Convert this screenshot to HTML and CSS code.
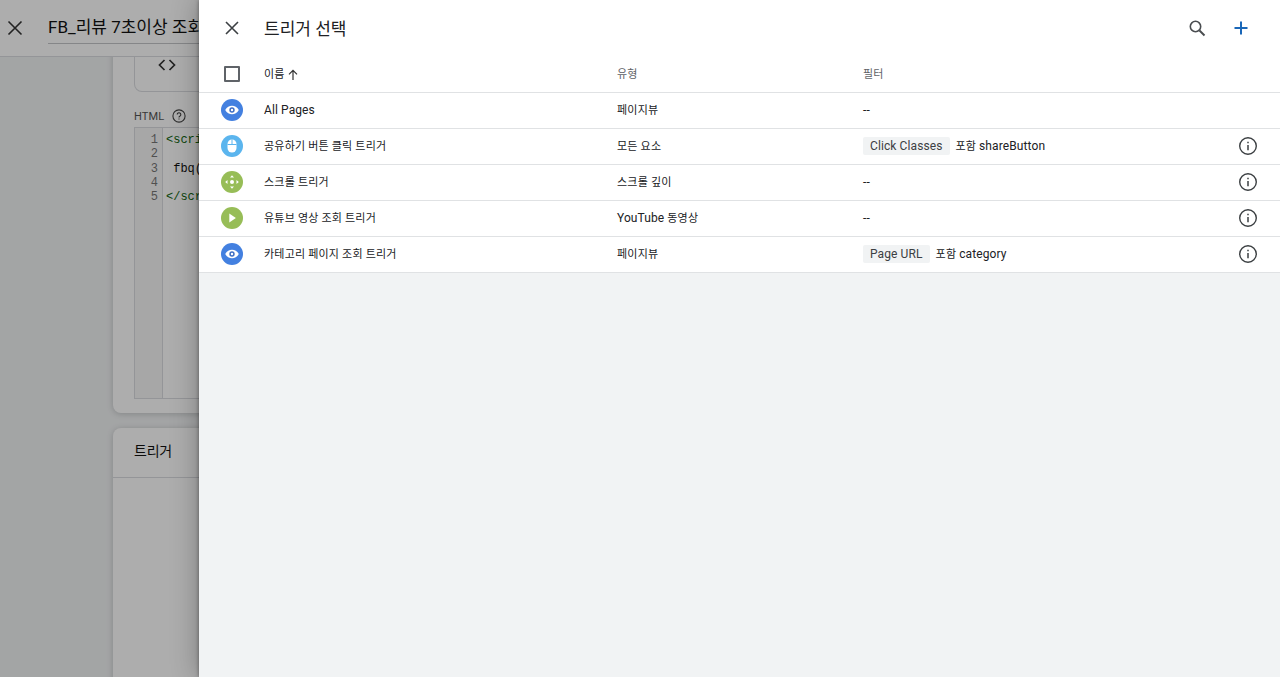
FILE: index.html
```html
<!DOCTYPE html>
<html lang="ko">
<head>
<meta charset="utf-8">
<title>트리거 선택</title>
<link rel="stylesheet" href="styles.css">
</head>
<body>
<div class="page">
  <div class="editor">
    <header class="topbar">
      <svg class="top-close" width="24" height="24" viewBox="0 0 24 24"><path d="M5.5 5.5l13 13M18.5 5.5l-13 13" fill="none" stroke="#333" stroke-width="1.6"/></svg>
      <div class="doc-title">FB_리뷰 7초이상 조회</div>
    </header>
    <main class="content">
      <section class="card card-config">
        <div class="type-box">
          <svg width="24" height="24" viewBox="0 0 24 24"><path d="M9.5 7l-5 5 5 5M14.5 7l5 5-5 5" fill="none" stroke="#333" stroke-width="1.7"/></svg>
        </div>
        <div class="html-label">
          <span>HTML</span>
          <svg width="14" height="14" viewBox="0 0 14 14"><circle cx="7" cy="7" r="6.1" fill="none" stroke="#444" stroke-width="1.1"/><path d="M5.2 5.5a1.8 1.8 0 1 1 2.8 1.5c-.7.4-1 .7-1 1.4M7 9.4v1.1" fill="none" stroke="#444" stroke-width="1.1"/></svg>
        </div>
        <div class="code-box">
          <div class="gutter"><span>1</span><span>2</span><span>3</span><span>4</span><span>5</span></div>
          <div class="code"><span class="tag">&lt;script&gt;</span><span>&nbsp;</span><span> fbq('track', 'ViewContent');</span><span>&nbsp;</span><span class="tag">&lt;/script&gt;</span></div>
        </div>
      </section>
      <section class="card card-trigger">
        <div class="card-head">트리거</div>
      </section>
    </main>
  </div>
  <div class="scrim"></div>
  <aside class="panel">
    <header class="panel-head">
      <svg class="panel-close" width="24" height="24" viewBox="0 0 24 24"><path d="M6 6l12 12M18 6L6 18" fill="none" stroke="#3c4043" stroke-width="1.6"/></svg>
      <h1 class="panel-title">트리거 선택</h1>
      <svg class="search" width="24" height="24" viewBox="0 0 24 24"><circle cx="10.5" cy="10.5" r="5.2" fill="none" stroke="#4a4d50" stroke-width="1.6"/><path d="M14.5 14.5l5 5" stroke="#4a4d50" stroke-width="1.9"/></svg>
      <svg class="plus" width="24" height="24" viewBox="0 0 24 24"><path d="M12 5.5v13M5.5 12h13" stroke="#1a67b8" stroke-width="2"/></svg>
    </header>
    <div class="table">
      <div class="row head">
        <div class="cell-icon"><span class="checkbox"></span></div>
        <div class="name-head">이름
          <svg width="14" height="14" viewBox="0 0 14 14"><path d="M7 12V2.5M3 6.3l4-4 4 4" fill="none" stroke="#333" stroke-width="1.2"/></svg>
        </div>
        <div>유형</div>
        <div>필터</div>
        <div></div>
      </div>
      <div class="row">
        <div class="cell-icon"><span class="badge blue"><svg width="16" height="16" viewBox="0 0 16 16"><path d="M1.2 8C3 5 5.3 3.7 8 3.7S13 5 14.8 8C13 11 10.7 12.3 8 12.3S3 11 1.2 8z" fill="#fff"/><circle cx="8" cy="8" r="2.7" fill="#3f6fc4"/><circle cx="8" cy="8" r="1.2" fill="#fff"/></svg></span></div>
        <div class="latin">All Pages</div>
        <div>페이지뷰</div>
        <div class="latin">--</div>
        <div></div>
      </div>
      <div class="row">
        <div class="cell-icon"><span class="badge sky"><svg width="16" height="16" viewBox="0 0 16 16"><rect x="3.5" y="1.5" width="9" height="13" rx="4.5" fill="#fff"/><path d="M3.5 6.5h9M8 1.5v5" stroke="#5bb5ee" stroke-width="1"/></svg></span></div>
        <div>공유하기 버튼 클릭 트리거</div>
        <div>모든 요소</div>
        <div class="filter"><span class="chip latin">Click Classes</span><span>포함 <span class="latin">shareButton</span></span></div>
        <div class="cell-info"><svg width="20" height="20" viewBox="0 0 20 20"><circle cx="10" cy="10" r="8.3" fill="none" stroke="#3c4043" stroke-width="1.4"/><path d="M10 9v5.2M10 5.7v1.6" stroke="#3c4043" stroke-width="1.5"/></svg></div>
      </div>
      <div class="row">
        <div class="cell-icon"><span class="badge green"><svg width="16" height="16" viewBox="0 0 16 16"><circle cx="8" cy="8" r="2" fill="#fff"/><path d="M8 1.2l2 2.3H6zM8 14.8l2-2.3H6zM1.2 8l2.3 2V6zM14.8 8l-2.3 2V6z" fill="#fff"/></svg></span></div>
        <div>스크롤 트리거</div>
        <div>스크롤 깊이</div>
        <div class="latin">--</div>
        <div class="cell-info"><svg width="20" height="20" viewBox="0 0 20 20"><circle cx="10" cy="10" r="8.3" fill="none" stroke="#3c4043" stroke-width="1.4"/><path d="M10 9v5.2M10 5.7v1.6" stroke="#3c4043" stroke-width="1.5"/></svg></div>
      </div>
      <div class="row">
        <div class="cell-icon"><span class="badge green"><svg width="16" height="16" viewBox="0 0 16 16"><path d="M5.3 3.6l6.6 4.4-6.6 4.4z" fill="#fff"/></svg></span></div>
        <div>유튜브 영상 조회 트리거</div>
        <div><span class="latin">YouTube</span> 동영상</div>
        <div class="latin">--</div>
        <div class="cell-info"><svg width="20" height="20" viewBox="0 0 20 20"><circle cx="10" cy="10" r="8.3" fill="none" stroke="#3c4043" stroke-width="1.4"/><path d="M10 9v5.2M10 5.7v1.6" stroke="#3c4043" stroke-width="1.5"/></svg></div>
      </div>
      <div class="row">
        <div class="cell-icon"><span class="badge blue"><svg width="16" height="16" viewBox="0 0 16 16"><path d="M1.2 8C3 5 5.3 3.7 8 3.7S13 5 14.8 8C13 11 10.7 12.3 8 12.3S3 11 1.2 8z" fill="#fff"/><circle cx="8" cy="8" r="2.7" fill="#3f6fc4"/><circle cx="8" cy="8" r="1.2" fill="#fff"/></svg></span></div>
        <div>카테고리 페이지 조회 트리거</div>
        <div>페이지뷰</div>
        <div class="filter"><span class="chip latin">Page URL</span><span>포함 <span class="latin">category</span></span></div>
        <div class="cell-info"><svg width="20" height="20" viewBox="0 0 20 20"><circle cx="10" cy="10" r="8.3" fill="none" stroke="#3c4043" stroke-width="1.4"/><path d="M10 9v5.2M10 5.7v1.6" stroke="#3c4043" stroke-width="1.5"/></svg></div>
      </div>
    </div>
  </aside>
</div>
</body>
</html>
```
FILE: styles.css
```css
* { box-sizing: border-box; }
html, body { margin: 0; height: 100%; overflow: hidden; }
body { font-family: Roboto, "Noto Sans CJK KR", sans-serif; color: #202124; }

.page { position: relative; width: 1280px; height: 677px; overflow: hidden; background: #f1f3f4; }

.editor { display: flex; flex-direction: column; height: 100%; }
.topbar { flex: 0 0 57px; display: flex; align-items: center; padding: 0 0 1px 3px; background: #fff; border-bottom: 1px solid #dadce0; }
.top-close { flex: none; }
.doc-title { margin-left: 21px; width: 160px; height: 32px; font-size: 17px; line-height: 30px; white-space: nowrap; overflow: hidden; color: #111; border-bottom: 1px solid #c4c6c9; }

.content { flex: 1; overflow: hidden; padding-left: 113px; }
.card { width: 1040px; background: #fff; border-radius: 8px; box-shadow: 0 1px 6px rgba(60,64,67,.25); }
.card-config { height: 376px; margin-top: -20px; padding: 0 21px; }
.type-box { height: 55px; display: flex; align-items: flex-start; padding: 16px 0 0 20px; border: 1px solid #dadce0; border-top: 0; border-radius: 0 0 8px 8px; }
.html-label { display: flex; align-items: center; gap: 8px; height: 14px; margin-top: 17px; font-size: 11px; letter-spacing: .1px; color: #555; }
.code-box { display: flex; height: 272px; margin-top: 4px; border: 1px solid #dadce0; font: 12px/14.3px "Liberation Mono", monospace; }
.gutter { flex: 0 0 28px; display: flex; flex-direction: column; align-items: flex-end; padding: 5px 4px 0 0; background: #f7f7f7; border-right: 1px solid #dadce0; color: #777; font-size: 12px; }
.code { flex: 1; display: flex; flex-direction: column; padding: 5px 0 0 3px; white-space: pre; color: #111; }
.tag { color: #116611; }
.card-trigger { height: 300px; margin-top: 15px; }
.card-head { height: 50px; padding-left: 21px; font-size: 14px; letter-spacing: -.2px; line-height: 46px; color: #111; border-bottom: 1px solid #dadce0; }

.scrim { position: absolute; inset: 0; background: rgba(0,0,0,.32); }

.panel { position: absolute; top: 0; right: 0; bottom: 0; width: 1081px; background: #f1f3f4; box-shadow: 0 0 26px rgba(0,0,0,.3), 0 0 4px rgba(0,0,0,.4); }
.panel-head { display: flex; align-items: center; height: 56px; padding-left: 21px; background: #fff; }
.panel-title { margin: 0 0 2px 20px; flex: 1; font-size: 17px; font-weight: 400; color: #202124; }
.search { margin-right: 20px; }
.plus { margin-right: 27px; }

.table { background: #fff; }
.row { display: grid; grid-template-columns: 65px 353px 246px 1fr 40px; align-items: center; height: 36px; padding-right: 12px; font-size: 11px; line-height: 16px; letter-spacing: .2px; color: #202124; border-bottom: 1px solid #e0e2e4; }
.row.head { height: 37px; padding-top: 2px; color: #5f6368; }
.name-head { display: flex; align-items: center; gap: 2px; color: #202124; }
.name-head svg { margin-left: -1px; }
.latin { font-size: 12px; letter-spacing: .1px; margin-bottom: 2px; }
.cell-icon { display: flex; justify-content: center; padding-left: 1px; margin-bottom: 2px; }
.checkbox { width: 16px; height: 16px; border: 2px solid #5f6368; border-radius: 1px; }
.badge { display: flex; align-items: center; justify-content: center; width: 22px; height: 22px; border-radius: 50%; }
.blue { background: #4380e0; }
.sky { background: #5bb5ee; }
.green { background: #97bd57; }
.filter { display: flex; align-items: center; gap: 6px; }
.chip { padding: 0 7px; height: 18px; line-height: 18px; background: #f1f3f4; border-radius: 2px; color: #3c4043; }
.cell-info { display: flex; justify-content: center; margin-bottom: 2px; }
```
